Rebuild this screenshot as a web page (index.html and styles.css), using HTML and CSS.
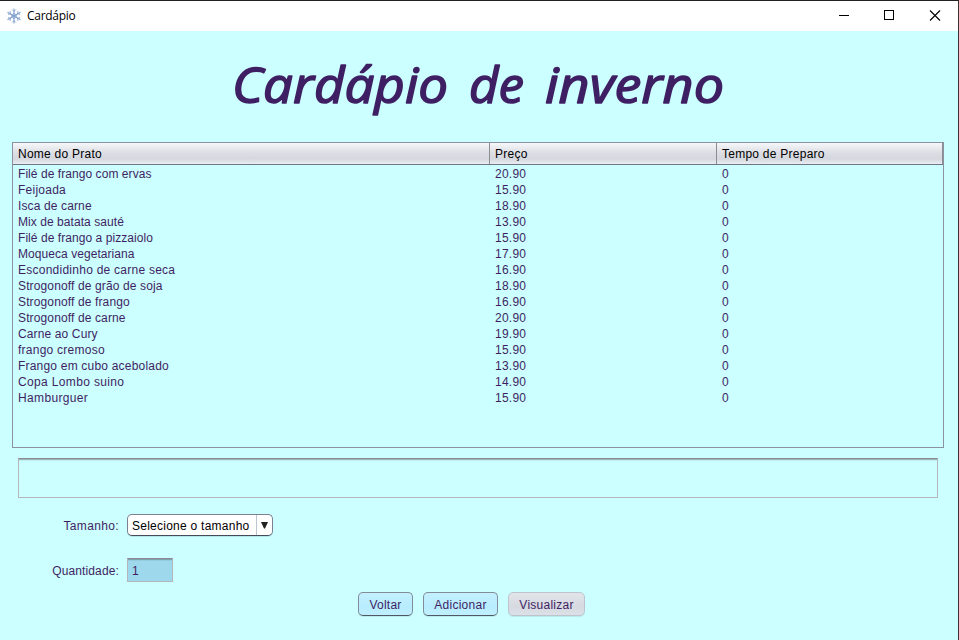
FILE: index.html
```html
<!DOCTYPE html>
<html lang="pt-BR">
<head>
<meta charset="utf-8">
<title>Cardápio</title>
<link rel="stylesheet" href="styles.css">
</head>
<body>
<div class="window">
  <header class="titlebar">
    <svg class="flake" width="14" height="16" viewBox="0 0 14 16" fill="none" stroke="#7f9fcd">
      <path d="M7 .5v15M.5 4.200l13 7.600M13.500 4.200l-13 7.600" stroke-width="1.100"/>
      <path d="M5 1.500l2 2 2-2M5 14.500l2-2 2 2M1 6.500l2.500-.8L3 3M13 6.500l-2.500-.8L11 3M1 9.500l2.500.8L3 13M13 9.500l-2.500.8L11 13M7 5.500l2.200 1.300v2.400L7 10.500 4.800 9.200V6.800z" stroke-width=".8"/>
    </svg>
    <span class="caption">Cardápio</span>
    <svg class="controls" width="104" height="12" viewBox="0 0 104 12" fill="none" stroke="#000">
      <path d="M0 5.500h10M45.500 .5h9v9h-9z" shape-rendering="crispEdges"/>
      <path d="M91 .5l10 10M101 .5l-10 10" stroke-width="1.100"/>
    </svg>
  </header>
  <h1 class="heading">
    <svg width="510" height="80" viewBox="0 0 510 80">
      <text x="8" y="53" textLength="216" lengthAdjust="spacingAndGlyphs">Cardápio</text>
      <text x="245" y="53" textLength="55" lengthAdjust="spacingAndGlyphs">de</text>
      <text x="321" y="53" textLength="179" lengthAdjust="spacingAndGlyphs">inverno</text>
    </svg>
  </h1>
  <div class="table">
    <div class="row head"><span>Nome do Prato</span><span>Preço</span><span>Tempo de Preparo</span></div>
    <div class="rows">
      <div class="row"><span class="tight">Filé de frango com ervas</span><span>20.90</span><span>0</span></div>
      <div class="row"><span>Feijoada</span><span>15.90</span><span>0</span></div>
      <div class="row"><span class="snug">Isca de carne</span><span>18.90</span><span>0</span></div>
      <div class="row"><span class="tight">Mix de batata sauté</span><span>13.90</span><span>0</span></div>
      <div class="row"><span class="tight">Filé de frango a pizzaiolo</span><span>15.90</span><span>0</span></div>
      <div class="row"><span class="tight">Moqueca vegetariana</span><span>17.90</span><span>0</span></div>
      <div class="row"><span>Escondidinho de carne seca</span><span>16.90</span><span>0</span></div>
      <div class="row"><span class="snug">Strogonoff de grão de soja</span><span>18.90</span><span>0</span></div>
      <div class="row"><span class="snug">Strogonoff de frango</span><span>16.90</span><span>0</span></div>
      <div class="row"><span class="snug">Strogonoff de carne</span><span>20.90</span><span>0</span></div>
      <div class="row"><span class="snug">Carne ao Cury</span><span>19.90</span><span>0</span></div>
      <div class="row"><span>frango cremoso</span><span>15.90</span><span>0</span></div>
      <div class="row"><span class="medium">Frango em cubo acebolado</span><span>13.90</span><span>0</span></div>
      <div class="row"><span class="wide">Copa Lombo suino</span><span>14.90</span><span>0</span></div>
      <div class="row"><span class="wide">Hamburguer</span><span>15.90</span><span>0</span></div>
    </div>
  </div>
  <div class="field message"></div>
  <div class="form-row size-row">
    <span class="label wide">Tamanho:</span>
    <div class="combo"><span class="choice">Selecione o tamanho</span><span class="arrow"><svg width="7" height="7" viewBox="0 0 7 7"><path d="M0 0h7L4 6.500h-1z" fill="#222"/></svg></span></div>
  </div>
  <div class="form-row amount-row">
    <span class="label snug">Quantidade:</span>
    <div class="field amount">1</div>
  </div>
  <div class="buttons">
    <div class="button back">Voltar</div>
    <div class="button add">Adicionar</div>
    <div class="button view">Visualizar</div>
  </div>
</div>
</body>
</html>
```
FILE: styles.css
```css
* { box-sizing: border-box; }
body { margin: 0; }
.window {
  width: 959px;
  height: 640px;
  overflow: hidden;
  background: #ccffff;
  border-top: 1px solid #231f20;
  border-right: 1px solid #3c3030;
  color: #3f1f63;
  font: 12px/16px "Liberation Sans", Arial, sans-serif;
  letter-spacing: .25px;
}
.tight { letter-spacing: .06px; }
.snug { letter-spacing: .13px; }
.medium { letter-spacing: .2px; }
.wide { letter-spacing: .35px; }
.titlebar {
  display: flex;
  align-items: center;
  height: 30px;
  padding: 0 15px 0 7px;
  background: #fff;
  color: #000;
}
.caption {
  margin-left: 6px;
  font: 12px/16px "Open Sans", "Noto Sans", sans-serif;
  letter-spacing: -.3px;
}
.controls { margin-left: auto; }
.heading {
  margin: 19px 0 12px 224px;
  height: 80px;
}
.heading svg { display: block; }
.heading text {
  font: italic 400 49px "Open Sans", sans-serif;
  letter-spacing: 0;
  fill: #3f1f63;
  stroke: #3f1f63;
  stroke-width: 1.5px;
  stroke-linejoin: round;
}
.table {
  width: 932px;
  height: 306px;
  margin-left: 12px;
  border: 1px solid #8c92a0;
}
.row {
  display: grid;
  grid-template-columns: 477px 227px 226px;
}
.row span { padding-left: 5px; white-space: nowrap; }
.head {
  height: 22px;
  line-height: 22px;
  color: #000;
  border-bottom: 1px solid #707681;
  background: linear-gradient(#f6f7f9, #dddfe5 45%, #d5d7de 75%, #e9eef4);
}
.head span { height: 21px; border-right: 1px solid #8a8d94; }
.rows { padding-top: 1px; }
.field {
  border: 1px solid #b6b6ba;
  border-top-color: #8c8c90;
  box-shadow: inset 0 1px rgba(90, 100, 110, .4), inset 0 2px rgba(90, 100, 110, .1);
}
.message { width: 920px; height: 40px; margin: 10px 0 0 18px; }
.form-row { display: flex; align-items: center; }
.label { width: 119px; margin-right: 8px; padding-top: 2px; text-align: right; }
.size-row { height: 22px; margin-top: 16px; }
.combo {
  display: flex;
  width: 146px;
  height: 22px;
  border: 1px solid #7c8090;
  border-bottom-color: #444b5c;
  border-radius: 5px;
  background: #fff;
  color: #000;
  line-height: 22px;
  box-shadow: 0 1px rgba(60, 80, 90, .15);
}
.choice { flex: 1; padding-left: 4px; white-space: nowrap; }
.arrow {
  display: flex;
  align-items: center;
  justify-content: center;
  width: 16px;
  border-left: 1px solid #bcc5d0;
}
.amount-row { height: 24px; margin-top: 22px; }
.amount {
  width: 46px;
  height: 24px;
  padding-left: 4px;
  line-height: 24px;
  background: #9dd8ec;
}
.buttons { display: flex; gap: 10px; margin: 10px 0 0 358px; }
.button {
  height: 24px;
  border: 1px solid #838c98;
  border-bottom-color: #4f5864;
  border-radius: 5px;
  background: linear-gradient(#c4f0ff, #b7edff 60%, #c0f0ff);
  line-height: 24px;
  text-align: center;
  box-shadow: 0 1px rgba(60, 80, 90, .12);
}
.back { width: 55px; }
.add { width: 75px; }
.view {
  width: 77px;
  border-color: #bec4ce;
  background: linear-gradient(#e2e5ea, #d6d9e0 60%, #dce0e7);
}
```
